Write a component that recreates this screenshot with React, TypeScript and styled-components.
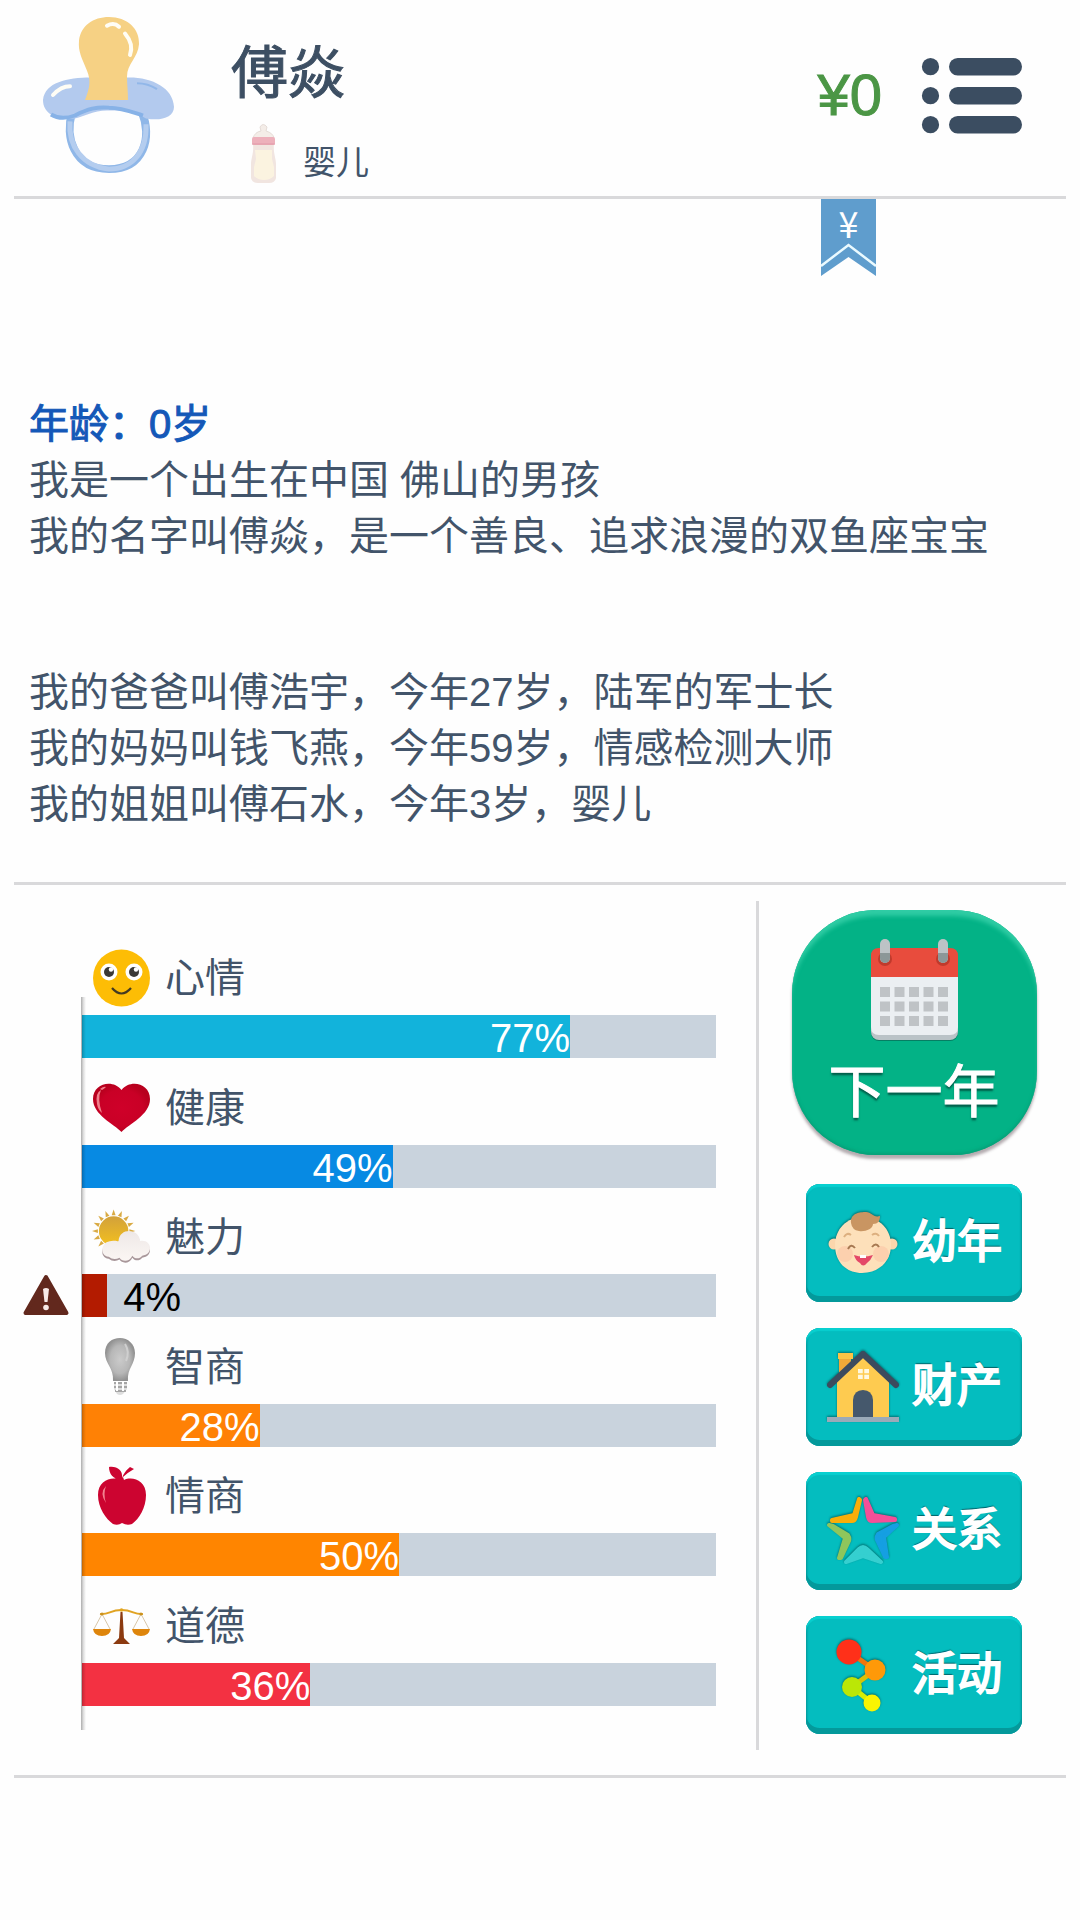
import React from "react";
import styled, { createGlobalStyle } from "styled-components";

const ink = "#42546a";
const rule = "#d9d9db";

const GlobalStyle = createGlobalStyle`
  * { box-sizing: border-box; }
  body {
    margin: 0;
    background: #fefefe;
    color: ${ink};
    font-family: "Liberation Sans", "Noto Sans CJK SC", sans-serif;
  }
  button { font-family: inherit; border: 0; padding: 0; cursor: pointer; }
  h1, h2, p { margin: 0; }
  svg { display: block; flex: none; overflow: visible; }
`;

const Page = styled.div`
  padding: 0 14px 143px;
`;

const Header = styled.header`
  position: relative;
  display: flex;
  align-items: center;
  height: 199px;
  padding: 0 44px 6px 29px;
  border-bottom: 3px solid ${rule};
`;

const Profile = styled.div`
  flex: 1;
  display: flex;
  flex-direction: column;
  gap: 10px;
  padding: 30px 0 0 56px;
`;

const Name = styled.h1`
  color: #3d4f63;
  font-size: 57px;
  line-height: 76px;
  font-weight: 400;
  -webkit-text-stroke: 1px #3d4f63;
`;

const Stage = styled.p`
  display: flex;
  align-items: center;
  gap: 27px;
  padding-left: 20px;
  font-size: 33px;
  line-height: 60px;
  span { padding-top: 20px; line-height: 44px; }
`;

const Money = styled.strong`
  margin-right: 40px;
  color: #4b9645;
  font-size: 58px;
  line-height: 64px;
  font-weight: 400;
  -webkit-text-stroke: 1px #4b9645;
`;

const MenuButton = styled.button`
  background: none;
`;

const Ribbon = styled.button`
  position: absolute;
  top: 199px;
  right: 190px;
  width: 55px;
  height: 77px;
  background: none;
  color: #fff;
  svg { position: absolute; inset: 0; }
  span {
    position: absolute;
    inset: 0 0 auto;
    font: 400 36px/46px "Noto Sans CJK SC", sans-serif;
  }
`;

const Story = styled.main`
  display: flex;
  flex-direction: column;
  gap: 100px;
  padding: 197px 15px 50px;
  border-bottom: 3px solid ${rule};
  font-size: 40px;
  line-height: 56px;
`;

const Age = styled.h2`
  color: #1458b8;
  font-size: 40px;
  line-height: 56px;
  font-weight: 400;
  -webkit-text-stroke: 1px #1458b8;
`;

const Dashboard = styled.section`
  display: flex;
  padding: 16px 0 25px;
  border-bottom: 3px solid ${rule};
`;

const Stats = styled.div`
  position: relative;
  flex: 1;
  display: flex;
  flex-direction: column;
  justify-content: space-between;
  padding: 42px 40px 44px 0;
  &::after {
    content: "";
    position: absolute;
    left: 67px;
    top: 96px;
    bottom: 20px;
    width: 5px;
    background: linear-gradient(90deg, rgba(0, 0, 0, 0.32), rgba(0, 0, 0, 0.12) 50%, transparent);
  }
`;

const Stat = styled.div`
  display: grid;
  grid-template-columns: 68px 1fr;
  grid-template-rows: 72px 43px;
`;

const StatLabel = styled.div`
  grid-column: 2;
  display: flex;
  align-items: center;
  gap: 14px;
  padding: 0 0 2px 10px;
  font-size: 40px;
  line-height: 56px;
`;

const Alert = styled.span`
  grid-row: 2;
  grid-column: 1;
  padding-left: 9px;
`;

const Track = styled.div`
  grid-row: 2;
  grid-column: 2;
  display: flex;
  background: #c9d3dd;
  font-size: 40px;
  line-height: 46px;
  height: 43px;
`;

const Fill = styled.div<{ $color: string }>`
  background: ${(p) => p.$color};
  color: #fff;
  text-align: right;
`;

const OutsideValue = styled.span`
  padding-left: 16px;
  color: #000;
`;

const Actions = styled.nav`
  display: flex;
  flex-direction: column;
  align-items: center;
  width: 310px;
  padding: 9px 0 16px 3px;
  border-left: 3px solid ${rule};
`;

const NextYear = styled.button`
  display: flex;
  flex-direction: column;
  align-items: center;
  width: 245px;
  height: 245px;
  margin-bottom: 29px;
  padding-top: 29px;
  border-radius: 84px;
  background: #03b286;
  box-shadow: inset 0 7px 4px -1px #2fcca4, inset 0 -2px 3px #07a078, 0 4px 3px rgba(70, 50, 60, 0.4);
  color: #fff;
  font-size: 57px;
  line-height: 76px;
  -webkit-text-stroke: 1px #fff;
  text-shadow: 0 3px 2px rgba(0, 60, 50, 0.7);
  span { padding-top: 13px; }
`;

const Action = styled.button`
  display: flex;
  align-items: center;
  gap: 13px;
  width: 216px;
  height: 118px;
  margin-bottom: 26px;
  padding-left: 21px;
  border-radius: 14px;
  background: #04bdbf;
  box-shadow: inset 0 -6px 0 #04999b, inset 0 3px 1px #08d0d0, inset 0 0 2px 1px #078f92;
  color: #fff;
  font-size: 45px;
  line-height: 60px;
  -webkit-text-stroke: 2px #fff;
  text-shadow: 0 -2px 1px rgba(0, 70, 75, 0.75);
  svg { filter: drop-shadow(0 -1px 1px rgba(0, 60, 60, 0.6)); }
  &:last-child { margin-bottom: 0; }
`;

const Pacifier = () => (
  <svg width="132" height="156" viewBox="0 0 132 160" preserveAspectRatio="none" aria-hidden="true">
    <path d="M29 98C22 122 30 156 66 156S109 122 99 98" fill="none" stroke="#8fb7e8" strokeWidth="8" />
    <path d="M27 107C25 132 39 153 66 156c23 0 38-17 37-46" fill="none" stroke="#b4cdef" strokeWidth="5" />
    <path d="M0 85C2 67 24 62 48 62h35c25-1 47 10 48 30 0 11-13 15-28 12C88 95 76 96 64 96c-14 0-22 6-32 8C15 106 0 100 0 85Z" fill="#b3caee" />
    <path d="M8 100c8 5 16 4 24 1 13-7 22-9 34-8 13 0 22 4 34 8" fill="none" stroke="#87b2e7" strokeWidth="4" />
    <path d="M94 68q11 0 20 6" fill="none" stroke="#91b7e9" strokeWidth="2" />
    <path d="M42 85c5-13 6-20 2-30C39 42 35 36 36 24 38 9 50 0 66 0c18 0 31 12 30 28-1 14-12 20-12 33 0 9 1 15 1 24Z" fill="#f6d184" />
    <path d="M64 9q7-4 12 1M82 17q9 11 5 22M10 80q8-9 17-9" fill="none" stroke="#fffdf5" strokeWidth="4" strokeLinecap="round" />
  </svg>
);

const Bottle = () => (
  <svg width="25" height="59" viewBox="0 0 25 59" aria-hidden="true">
    <path d="M2 14Q4 8 10 7L9 3q3-5 7 0l-1 4q7 2 8 7Z" fill="#f4ede8" stroke="#e5dcd7" />
    <path d="M2 20h21c-1 9 2 14 2 20v14q-1 5-7 5H7q-6 0-7-5V40C0 34 3 29 2 20Z" fill="#f1e5e0" />
    <path d="M4 26h17v9l2 8v9q-4 4-10 4T3 52v-9l2-8Z" fill="#fbf3e0" />
    <rect x="1" y="13" width="23" height="8" rx="2" fill="#edb0bb" />
    <path d="M1 20h23" stroke="#e199a8" />
  </svg>
);

const MenuIcon = () => (
  <svg width="100" height="75" viewBox="0 0 100 75" fill="#3b4d61" aria-hidden="true">
    {[0, 29, 58].map((y) => (
      <g key={y}>
        <circle cx="8.5" cy={y + 8.7} r="8.6" />
        <rect x="27" y={y} width="73" height="17.5" rx="8.7" />
      </g>
    ))}
  </svg>
);

const RibbonShape = () => (
  <svg width="55" height="77" viewBox="0 0 55 77" aria-hidden="true">
    <path d="M0 0H55V77L27.500 58 0 77Z" fill="#5f9dcd" />
    <path d="M0 67 27.500 46 55 67" fill="none" stroke="#eafaff" strokeWidth="2.500" />
  </svg>
);

const Smile = () => (
  <svg width="59" height="58" viewBox="0 0 59 58" aria-hidden="true">
    <circle cx="29.500" cy="29" r="28.500" fill="#fdbd05" />
    <circle cx="17" cy="23" r="8.500" fill="#fff" />
    <circle cx="42" cy="23" r="8.500" fill="#fff" />
    <circle cx="17" cy="23" r="5" fill="#3b3936" />
    <circle cx="42" cy="23" r="5" fill="#3b3936" />
    <circle cx="19" cy="20.500" r="2.200" fill="#fff" />
    <circle cx="44" cy="20.500" r="2.200" fill="#fff" />
    <path d="M20 39q9.500 11 19 0" fill="none" stroke="#433a22" strokeWidth="2.200" />
  </svg>
);

const Heart = () => (
  <svg width="59" height="58" viewBox="0 0 59 58" aria-hidden="true">
    <defs>
      <radialGradient id="heart"><stop stopColor="#cf0029" /><stop offset=".75" stopColor="#c90026" /><stop offset="1" stopColor="#b8001e" /></radialGradient>
    </defs>
    <path d="M29.500 53C22 45 1 36 1 20 1 4 21 0 29.500 11 38 0 58 4 58 20 58 36 37 45 29.500 53Z" fill="url(#heart)" />
    <path d="M5 25Q3 14 9 11Q5 20 10 34Q6 31 5 25ZM8 10q4-3 6-2-2 2-4 3Z" fill="#f07f8b" />
  </svg>
);

const Weather = () => (
  <svg width="59" height="58" viewBox="0 0 60 58" aria-hidden="true">
    <defs>
      <linearGradient id="sun" x2="0" y2="1"><stop stopColor="#d2a13b" /><stop offset="1" stopColor="#f3c01e" /></linearGradient>
      <linearGradient id="cloud" x2="0" y2="1"><stop stopColor="#eee8e7" /><stop offset="1" stopColor="#fbf6f3" /></linearGradient>
    </defs>
    <g fill="#d9aa43">
      {Array.from({ length: 16 }, (_, i) => (
        <path key={i} d="M20 7 22 1 24 7Z" transform={`rotate(${i * 22.5} 22 23)`} />
      ))}
    </g>
    <circle cx="22" cy="23" r="15" fill="url(#sun)" />
    <path d="M17 50c-10-1-8-16 3-16 5-1 6 1 7 0 1-14 21-13 22 0 12-2 14 14 2 15-3 4-8 3-10 0-3 7-11 6-13 2q-6 3-11-1Z" transform="translate(0 1)" fill="#a8979a" />
    <path d="M17 49c-10-1-8-16 3-16 5-1 6 1 7 0 1-14 21-13 22 0 12-2 14 14 2 15-3 4-8 3-10 0-3 7-11 6-13 2q-6 3-11-1Z" fill="url(#cloud)" />
  </svg>
);

const Bulb = () => (
  <svg width="59" height="58" viewBox="0 0 59 58" aria-hidden="true">
    <defs>
      <radialGradient id="glass"><stop stopColor="#cbcbcb" /><stop offset=".65" stopColor="#b7b7b7" /><stop offset="1" stopColor="#929292" /></radialGradient>
    </defs>
    <path d="M21 43C22 30 13 26 13 15 13 5 20 0 28 0s15 6 15 15c0 12-8 15-7 28Z" fill="url(#glass)" />
    <path d="M22 44h13v7l-4 5q-3 2-6 0l-3-5Z" fill="#dedede" />
    <path d="M22 45h13M22 49h13M23 53h11" stroke="#929292" strokeWidth="1.500" />
    <path d="M25 44v9M31 44v9" stroke="#fff" strokeWidth="2" />
    <path d="M33 6q5 8 1 17" fill="none" stroke="#cfcfcf" strokeWidth="2" />
  </svg>
);

const Apple = () => (
  <svg width="59" height="58" viewBox="0 0 59 58" aria-hidden="true">
    <path d="M29 13C20 9 6 13 6 28c0 13 8 24 15 29q5 2 9-1 5 3 10 1c7-5 14-16 14-29C54 13 40 9 32 13l-1-3Q35 6 42 2l-4-2q-6 5-8 11C31 3 25-1 17 0c0 7 4 12 12 13Z" fill="#cc0430" />
    <path d="M14 19q-7 7 0 17-3-9 0-17Z" fill="#f2828f" />
  </svg>
);

const Scales = () => (
  <svg width="59" height="58" viewBox="0 0 59 58" aria-hidden="true">
    <path d="M10 17 2 32M10 17l8 15M49 17 41 32M49 17l8 15" stroke="#d8c7aa" strokeWidth="1" />
    <path d="M8 17C17 18 18 13 29.500 13S42 18 51 17" fill="none" stroke="#e0a322" strokeWidth="2" />
    <path d="M1 32H19Q18 39 10 39T1 32ZM40 32H58Q57 39 49 39T40 32Z" fill="#de850b" />
    <path d="M28.500 15h2l1.500 26 6 6H21l6-6Z" fill="#8b3a10" />
    <circle cx="29.500" cy="13" r="1.800" fill="#e2a521" />
    <circle cx="10" cy="17" r="1.500" fill="#c99120" />
    <circle cx="49" cy="17" r="1.500" fill="#c99120" />
  </svg>
);

const Warning = () => (
  <svg width="46" height="43" viewBox="0 0 46 43" role="img" aria-label="警告">
    <path d="M23 3 43.500 39H2.500Z" fill="#62281d" stroke="#62281d" strokeWidth="4" strokeLinejoin="round" />
    <path d="M20 15q3-2 6 0l-1.500 13h-3Z" fill="#f7e9e6" />
    <circle cx="23" cy="33.500" r="2.800" fill="#f7e9e6" />
  </svg>
);

const Calendar = () => (
  <svg width="87" height="102" viewBox="0 0 87 102" aria-hidden="true">
    <rect y="14" width="87" height="88" rx="8" fill="#067e63" />
    <rect y="14" width="87" height="87" rx="8" fill="#bac3c7" />
    <path d="M0 36H87V88q0 8-8 8H8q-8 0-8-8Z" fill="#ebeff2" />
    <path d="M8 9H79q8 0 8 8V38H0V17Q0 9 8 9Z" fill="#e84c3d" />
    {[14, 72].map((x) => (
      <g key={x}>
        <circle cx={x} cy="20" r="7" fill="#c03a2c" />
        <rect x={x - 5} width="10" height="24" rx="5" fill="#bdc3c6" />
        <path d={`M${x - 5} 14h10v5a5 5 0 0 1-10 0Z`} fill="#8c9798" />
      </g>
    ))}
    {[0, 1, 2].map((r) =>
      [0, 1, 2, 3, 4].map((c) => (
        <rect key={`${r}-${c}`} x={9 + c * 14.5} y={48 + r * 14.5} width="10" height="10" fill="#bfc3c6" />
      ))
    )}
  </svg>
);

const Baby = () => (
  <svg width="72" height="72" viewBox="0 0 72 72" aria-hidden="true">
    <circle cx="7" cy="37" r="5.500" fill="#fbd6ac" />
    <circle cx="65" cy="37" r="5.500" fill="#fbd6ac" />
    <path d="M36 10C52 10 64 22 64 38 64 55 51 66 35 66S8 55 8 38C8 22 20 10 36 10Z" fill="#fde0ba" />
    <circle cx="18" cy="47" r="8" fill="#fcd0ae" />
    <circle cx="54" cy="47" r="8" fill="#fcd0ae" />
    <path d="M24 16c-1-10 9-11 15-11 6 0 7 6 14 4 0 5-2 8-7 8 0 5-8 8-14 7q-7-1-8-8Z" fill="#c99562" />
    <path d="M17 30q3-5 7-2M45 28q4-3 7 1" fill="none" stroke="#ddb080" strokeWidth="2" />
    <path d="M21 42q3-6 7-1M45 40q4-5 7 0" fill="none" stroke="#a77952" strokeWidth="2" />
    <path d="M27 48q9 3 19 0-2 5-6 8-4 5-7 0-5-3-6-8Z" fill="#e44868" />
    <path d="M33 48h6v3h-6Z" fill="#fff" />
  </svg>
);

const House = () => (
  <svg width="72" height="72" viewBox="0 0 72 72" aria-hidden="true">
    <path d="M12 6h12v16H12Z" fill="#f0a838" />
    <path d="M11 2h15v6H11Z" fill="#fdc345" />
    <path d="M10 29 36 4 62 29V66H10Z" fill="#fecb50" />
    <path d="M3 34 36 3 69 34" fill="none" stroke="#3c4b5e" strokeWidth="6" strokeLinejoin="round" strokeLinecap="round" />
    <path d="M26 66V49q1-10 10-10t10 10v17Z" fill="#45586c" />
    <path d="M31 18h11v10H31Z" fill="#fff8df" />
    <path d="M36.500 18v10M31 23h11" stroke="#fecb50" strokeWidth="1.500" />
    <path d="M0 66h72v5H0Z" fill="#9baab8" />
  </svg>
);

const Star = () => (
  <svg width="72" height="72" viewBox="0 0 72 72" strokeWidth="4" strokeLinecap="round" strokeLinejoin="round" aria-hidden="true">
    <path d="M32 4 27 20 5 25 5 26 25 26Q28 26 29 22L33 5Z" fill="#fbae09" stroke="#fbae09" />
    <path d="M39 4 46 20 68 24 68 25 45 26Q42 26 41 22L38 5Z" fill="#f44f98" stroke="#f44f98" />
    <path d="M2 30 18 43 12 63 14 63 22 46Q23 43 21 40L6 31Z" fill="#8fc65c" stroke="#8fc65c" />
    <path d="M70 30 57 42 60 62 58 62 50 45Q49 42 51 39L66 31Z" fill="#159fe2" stroke="#159fe2" />
    <path d="M19 67 32 54Q36 50 40 54L54 67 36 61Z" fill="#35cfd0" stroke="#35cfd0" />
  </svg>
);

const Network = () => (
  <svg width="72" height="72" viewBox="0 0 72 72" aria-hidden="true">
    <path d="M22 13 48 31" fill="none" stroke="#f0750c" strokeWidth="5" />
    <path d="M48 31 25 48" fill="none" stroke="#d9c208" strokeWidth="5" />
    <path d="M25 48 45 64" fill="none" stroke="#d6ee06" strokeWidth="5" />
    <circle cx="22" cy="13" r="12.500" fill="#ff3019" />
    <circle cx="48" cy="31" r="10.500" fill="#ff9908" />
    <circle cx="25" cy="48" r="10" fill="#bbe706" />
    <circle cx="45" cy="64" r="8.500" fill="#f9f403" />
  </svg>
);

const stats = [
  { label: "心情", value: 77, color: "#12b3db", Icon: Smile },
  { label: "健康", value: 49, color: "#078ae3", Icon: Heart },
  { label: "魅力", value: 4, color: "#b31b00", Icon: Weather },
  { label: "智商", value: 28, color: "#ff8105", Icon: Bulb },
  { label: "情商", value: 50, color: "#ff8500", Icon: Apple },
  { label: "道德", value: 36, color: "#f33142", Icon: Scales },
];

const actions = [
  { label: "幼年", Icon: Baby },
  { label: "财产", Icon: House },
  { label: "关系", Icon: Star },
  { label: "活动", Icon: Network },
];

export default function App() {
  return (
    <Page lang="zh-CN">
      <GlobalStyle />
      <Header>
        <Pacifier />
        <Profile>
          <Name>傅焱</Name>
          <Stage>
            <Bottle />
            <span>婴儿</span>
          </Stage>
        </Profile>
        <Money>¥0</Money>
        <MenuButton aria-label="菜单">
          <MenuIcon />
        </MenuButton>
        <Ribbon>
          <RibbonShape />
          <span>¥</span>
        </Ribbon>
      </Header>
      <Story>
        <div>
          <Age>年龄：0岁</Age>
          <p>我是一个出生在中国 佛山的男孩</p>
          <p>我的名字叫傅焱，是一个善良、追求浪漫的双鱼座宝宝</p>
        </div>
        <div>
          <p>我的爸爸叫傅浩宇，今年27岁，陆军的军士长</p>
          <p>我的妈妈叫钱飞燕，今年59岁，情感检测大师</p>
          <p>我的姐姐叫傅石水，今年3岁，婴儿</p>
        </div>
      </Story>
      <Dashboard>
        <Stats>
          {stats.map(({ label, value, color, Icon }) => (
            <Stat key={label}>
              <StatLabel>
                <Icon />
                {label}
              </StatLabel>
              {value < 10 && (
                <Alert>
                  <Warning />
                </Alert>
              )}
              <Track role="progressbar" aria-label={label} aria-valuenow={value}>
                <Fill $color={color} style={{ width: `${value}%` }}>
                  {value >= 10 && `${value}%`}
                </Fill>
                {value < 10 && <OutsideValue>{value}%</OutsideValue>}
              </Track>
            </Stat>
          ))}
        </Stats>
        <Actions>
          <NextYear>
            <Calendar />
            <span>下一年</span>
          </NextYear>
          {actions.map(({ label, Icon }) => (
            <Action key={label}>
              <Icon />
              {label}
            </Action>
          ))}
        </Actions>
      </Dashboard>
    </Page>
  );
}
